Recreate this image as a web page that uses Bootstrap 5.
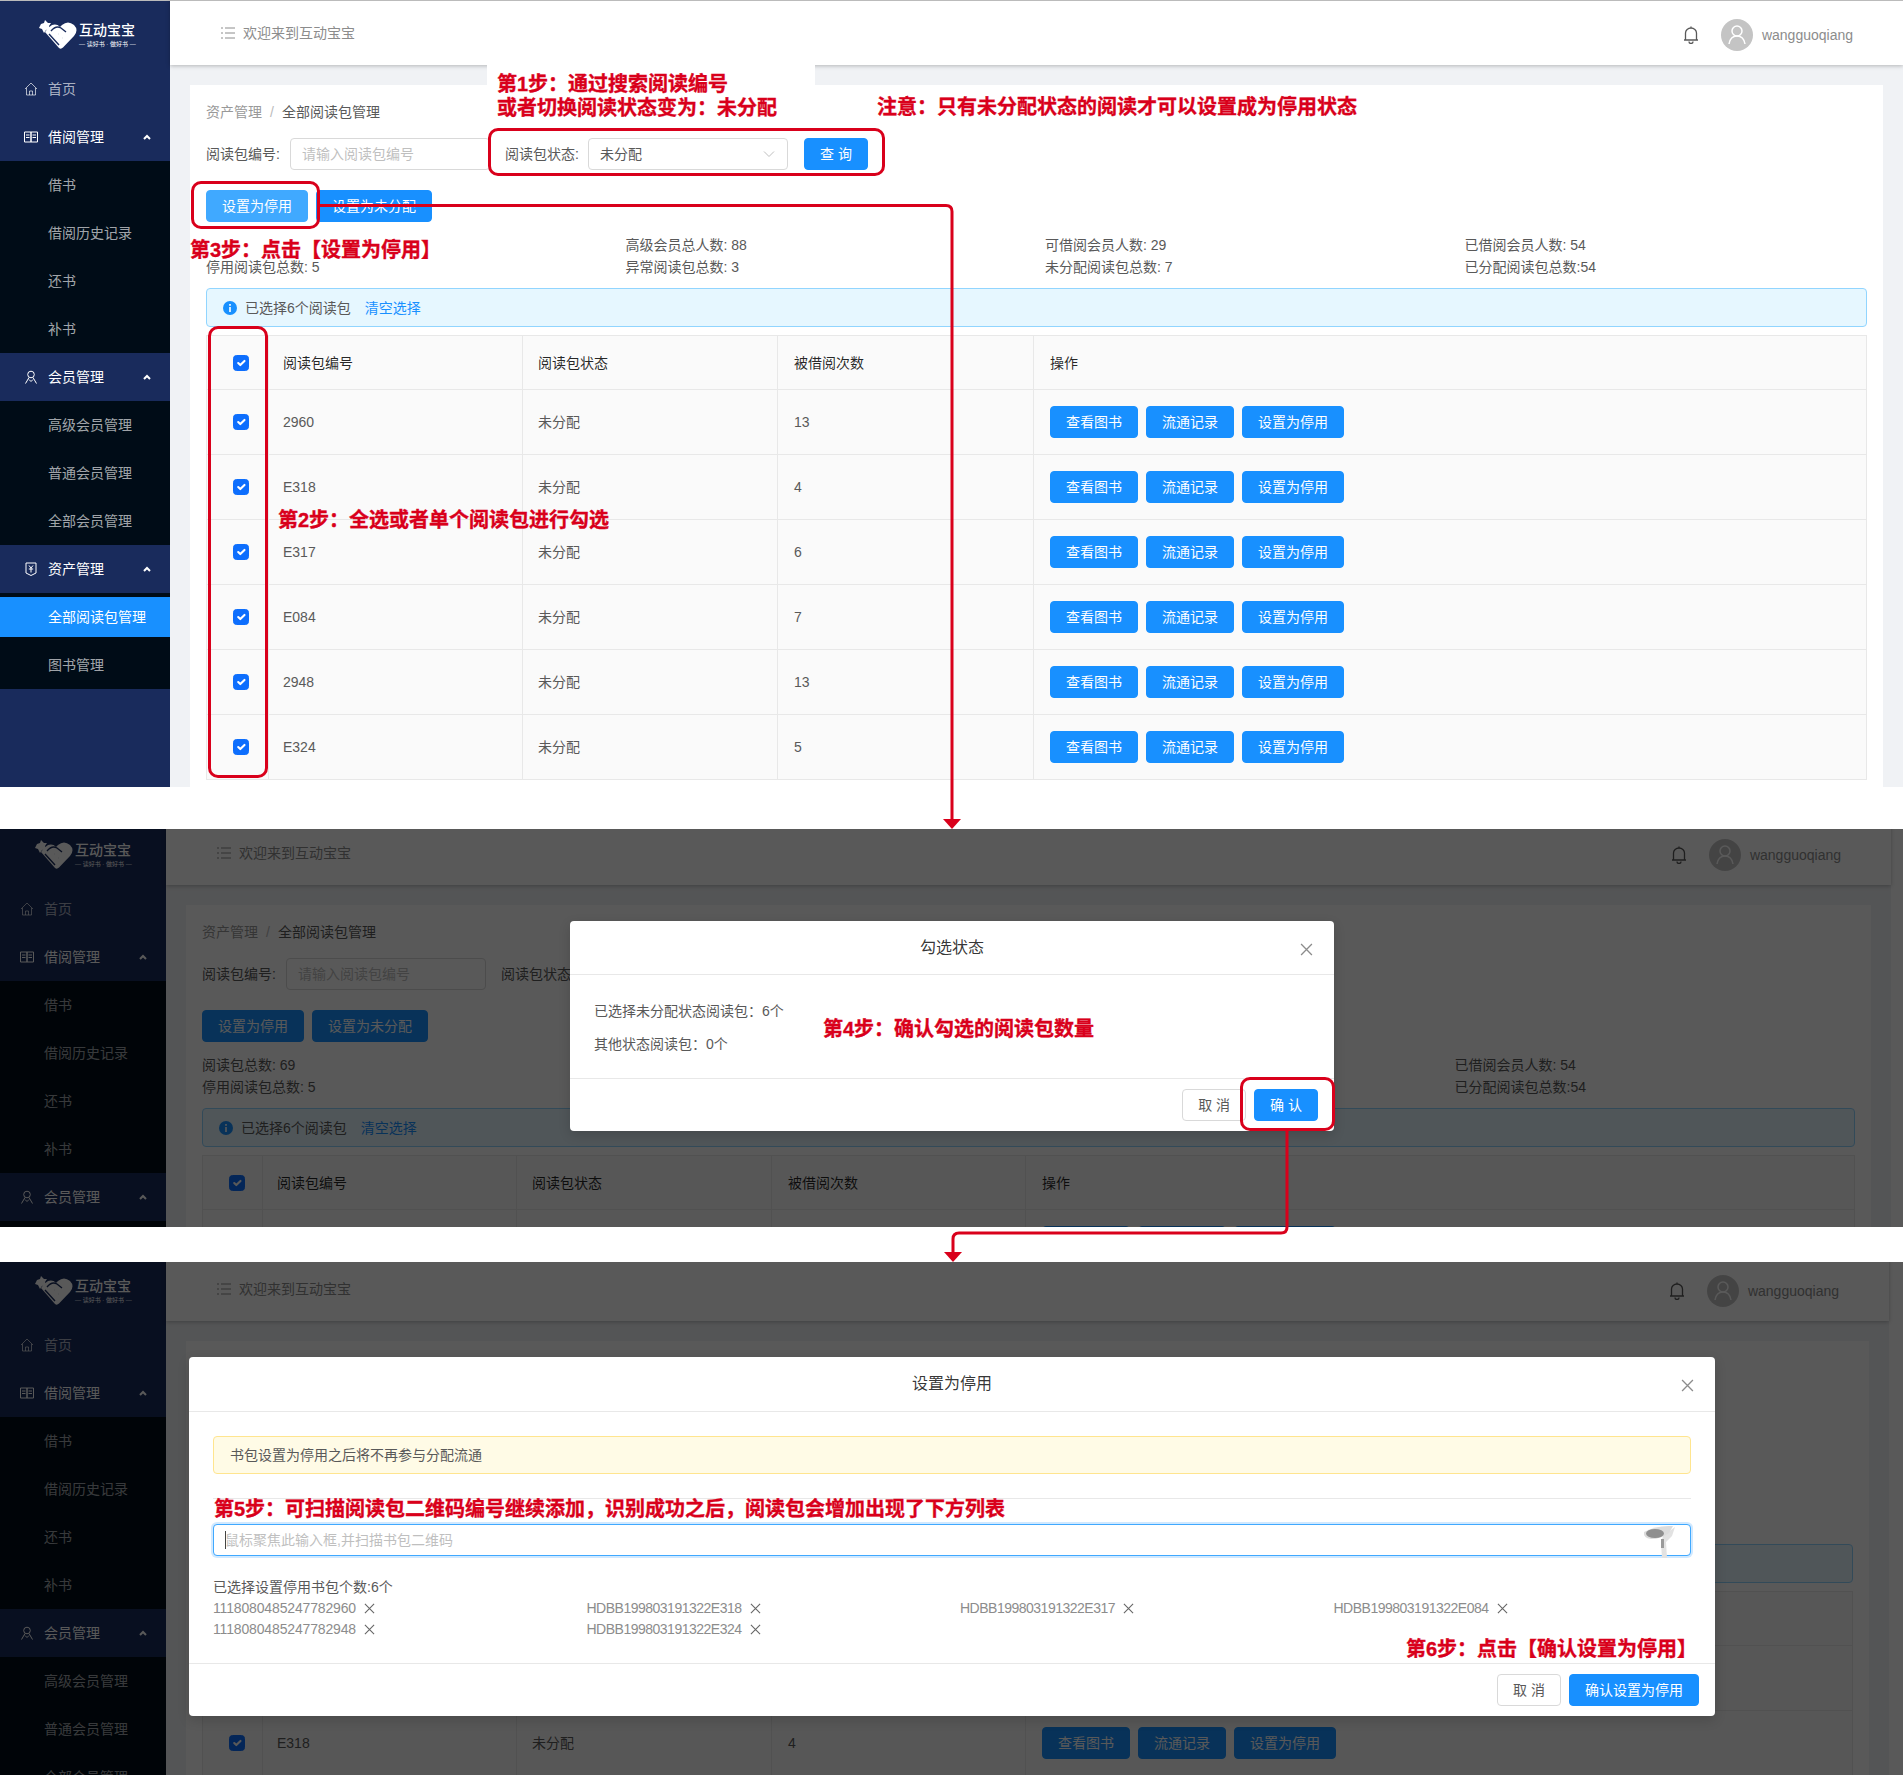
<!DOCTYPE html>
<html lang="zh-CN">
<head>
<meta charset="utf-8">
<title>互动宝宝 - 设置为停用操作步骤</title>
<link href="https://cdn.jsdelivr.net/npm/bootstrap@5.3.0/dist/css/bootstrap.min.css" rel="stylesheet">
<style>
html,body{margin:0;background:#fff}
body{font-family:"Liberation Sans","Noto Sans CJK SC",sans-serif;font-size:14px;line-height:22px;color:#595959}
.canvas{position:relative;width:1903px;height:1775px;overflow:hidden;background:#fff}
.shot{position:relative;overflow:hidden;background:#fff}
.shot-a{height:787px;margin-bottom:42px}
.shot-b{height:398px;margin-bottom:35px}
.shot-c{height:513px}
.app{min-height:1000px}
.shot-a .app{width:1903px}
.shot-b .app{width:1895px;margin-left:-4px;margin-top:-9px}
.shot-c .app{width:1893px;margin-left:-4px;margin-top:-6px}
.scrim{position:absolute;inset:0;background:rgba(0,0,0,.65)}
.side{width:170px;flex:none;background:#192b5c;color:rgba(255,255,255,.65)}
.brand{height:65px;position:relative;border-top:1px solid #bbb}
.brand svg{position:absolute;left:39px;top:17px}
.brand-t{position:absolute;left:79px;top:19px;width:56px;color:#fff;text-align:left}
.brand-t b{display:block;font-size:14px;line-height:20px;font-weight:500}
.brand-t i{display:block;font-style:normal;font-size:6px;line-height:9px;white-space:nowrap}
.nv{height:48px;padding:0 19px 0 24px;display:flex;align-items:center;gap:10px}
.nv svg.ic{width:14px;height:14px;flex:none}
.nv.on{color:#fff}
.nv .up{margin-left:auto;width:8px;height:6px}
.subs{background:#000c17;padding:4px 0}
.subs div{height:40px;line-height:40px;padding-left:48px;margin-bottom:8px}
.subs div:last-child{margin-bottom:0}
.subs .cur{background:#1890ff;color:#fff}
.wrap{flex:1 1 0;min-width:0;background:#f0f2f5;display:flex;flex-direction:column}
.top{height:65px;background:#fff;box-shadow:0 1px 4px rgba(0,0,0,.25);padding:0 50px 0 51px;color:#8c8c8c;position:relative;border-top:1px solid #bbb}
.top .lst{width:14px;height:12px}
.top .who{padding-top:3px;gap:9px;color:#8c8c8c}
.top .bell{width:16px;height:18px;margin-right:13px;color:#595959}
.ava{width:32px;height:32px;border-radius:50%;background:#c4c4c4}
.sheet{flex:1;background:#fff;margin:20px 20px 0;padding:16px 16px 0}
.crumb{color:#999;height:22px}
.crumb span:last-child{color:#595959}
.crumb em{font-style:normal;margin:0 8px;color:#bbb}
.frm{margin-top:15px}
.lbl{width:84px;flex:none;white-space:nowrap}
.lbl2{width:83px;margin-left:15px}
.fld{width:200px;height:32px;font-size:14px;padding:4px 11px;border-color:#d9d9d9;border-radius:4px;color:#595959;flex:none}
.fld::placeholder{color:#bfbfbf}
.form-select.fld{background-size:12px 12px;background-position:right 12px center;background-image:url("data:image/svg+xml,%3csvg xmlns='http://www.w3.org/2000/svg' viewBox='0 0 12 12'%3e%3cpath fill='none' stroke='%23bfbfbf' d='M1 3.500l5 5 5-5'/%3e%3c/svg%3e")}
.btn-a{--bs-btn-bg:#1890ff;--bs-btn-border-color:#1890ff;--bs-btn-color:#fff;height:32px;padding:0 15px;font-size:14px;line-height:30px;border-radius:4px;white-space:nowrap}
.btn-a.lite{--bs-btn-bg:#40a9ff;--bs-btn-border-color:#40a9ff}
.btn-g{--bs-btn-bg:#fff;--bs-btn-border-color:#d9d9d9;--bs-btn-color:#595959;height:32px;padding:0 15px;font-size:14px;line-height:30px;border-radius:4px;white-space:nowrap}
.acts{margin-top:20px}
.stat{margin-top:12px;margin-right:-17px}
.tip{margin:10px 0 8px;height:39px;padding:0 16px;border-radius:4px;background:#e6f7ff;border:1px solid #91d5ff;color:#595959;gap:8px}
.tip svg{width:14px;height:14px}
.tip a{color:#1890ff;text-decoration:none;margin-left:6px}
.tbl{--bs-table-bg:#fafafa;--bs-table-border-color:#e8e8e8;--bs-table-color:#595959;table-layout:fixed;width:100%;margin:0}
.tbl>:not(caption)>*>*{padding:0 16px;vertical-align:middle;height:65px;font-size:14px}
.tbl>thead>tr>th{height:54px;font-weight:400;color:rgba(0,0,0,.85)}
.tbl>*>tr>.c0{width:62px;padding:0}
.tbl .c1{width:254px}.tbl .c2{width:255px}.tbl .c3{width:256px}
.tbl>*>tr>:nth-child(2){padding-left:14px}
.tbl>*>tr>:nth-child(3){padding-left:15px}
.shot-b .tbl>*>tr>.c0,.shot-c .tbl>*>tr>.c0{width:60px}
.shot-b .tbl .c3,.shot-c .tbl .c3{width:254px}
.tick{width:16px;height:16px;margin:0;display:block;margin-left:26px;background-color:#1890ff;border-color:#1890ff;border-radius:2px}
.dlg{position:absolute;background:#fff;border:0;border-radius:4px;box-shadow:0 4px 12px rgba(0,0,0,.15);display:flex;flex-direction:column;color:#595959}
.dlg-1{left:570px;top:92px;width:764px;height:210px}
.dlg-2{left:189px;top:95px;width:1526px;height:359px}
.dlg .modal-header{height:55px;flex:none;padding:0 24px;justify-content:center;position:relative;border-bottom:1px solid #e8e8e8;font-size:16px;line-height:22px;color:rgba(0,0,0,.8)}
.dlg .shut{position:absolute;right:21px;top:22px;width:13px;height:13px;color:#8c8c8c}
.dlg .modal-body{flex:1 1 0;min-height:0;padding:24px 24px 0}
.dlg-1 .modal-header{height:54px}
.dlg-1 .modal-body{padding-top:25px}
.dlg-1 .modal-body p{margin:0 0 11px}
.dlg .modal-footer{height:53px;flex:none;padding:10px 16px;gap:8px;justify-content:flex-end;border-top:1px solid #e8e8e8;display:flex;flex-wrap:nowrap}
.dlg .modal-footer>*{margin:0}
.warn{height:38px;padding:0 16px;margin:0;background:#fffbe6;border:1px solid #ffe58f;border-radius:4px;color:#595959}
.rule{height:1px;background:#e8e8e8;margin:24px 0 25px;opacity:1;border:0}
.scanbox{height:32px}
.scan{height:32px;font-size:14px;padding:4px 11px;border:1px solid #40a9ff;border-radius:4px;box-shadow:0 0 0 2px rgba(24,144,255,.2)}
.scan::placeholder{color:#bfbfbf}
.cursor{position:absolute;left:12px;top:7px;width:1px;height:18px;background:#444}
.gun{position:absolute;right:14px;top:0;width:34px;height:34px}
.picked{margin-top:20px}
.ids{margin-right:-16px;line-height:21px;color:#8c8c8c}
.ids span{letter-spacing:-.5px}
.ids span.digits{letter-spacing:-.15px}
.ids svg{width:11px;height:11px;margin-left:8px;color:#666;vertical-align:-1px}
.hot{position:absolute;border:3px solid #d9001b;border-radius:10px;pointer-events:none}
.hot-a{left:488px;top:128px;width:397px;height:48px}
.hot-b{left:191px;top:181px;width:129px;height:48px}
.hot-c{left:208px;top:326px;width:60px;height:452px}
.hot-d{left:1240px;top:1077px;width:95px;height:54px}
.say{position:absolute;color:#d9001b;font-weight:700;font-size:20px;line-height:24px;white-space:nowrap;-webkit-text-stroke:.35px #d9001b}
.say-1{left:487px;top:65px;width:328px;height:63px;padding:7px 0 0 10px;background:#fff}
.say-n{left:877px;top:95px}
.say-2{left:278px;top:508px}
.say-3{left:190px;top:238px;width:246px;height:22px;background:#fff}
.say-4{left:823px;top:1017px}
.say-5{left:214px;top:1497px}
.say-6{left:1406px;top:1637px}
.wires{position:absolute;left:0;top:0;width:1903px;height:1775px;pointer-events:none}
</style>
</head>
<body>
<svg width="0" height="0" class="position-absolute">
<defs>
<symbol id="i-home" viewBox="0 0 14 14"><path d="M1 7 7 1l6 6M2.500 6v7h9V6M5.500 13V9h3v4" fill="none" stroke="currentColor"/></symbol>
<symbol id="i-book" viewBox="0 0 14 14"><path d="M.5 2h6.500v10H.5zM7 2h6.500v10H7zM2 5h3.500M2 7.500h3.500M8.500 5H12M8.500 7.500H12" fill="none" stroke="currentColor"/></symbol>
<symbol id="i-user" viewBox="0 0 14 14"><circle cx="7" cy="4.500" r="3.300" fill="none" stroke="currentColor"/><path d="M5 7.500 1.500 13.500M9 7.500l3.500 6M5 9.500l2 2 2-2" fill="none" stroke="currentColor"/></symbol>
<symbol id="i-asset" viewBox="0 0 14 14"><path d="M2 1h10v10l-5 2.500L2 11z" fill="none" stroke="currentColor"/><path d="M5 3.500 7 6l2-2.500M4.800 7h4.400M7 6v4.500" fill="none" stroke="currentColor"/></symbol>
<symbol id="i-up" viewBox="0 0 8 6"><path d="M1 5 4 2l3 3" fill="none" stroke="currentColor" stroke-width="2"/></symbol>
<symbol id="i-list" viewBox="0 0 14 12"><path d="M0 1h2M4 1h10M0 6h2M4 6h10M0 11h2M4 11h10" stroke="currentColor"/></symbol>
<symbol id="i-bell" viewBox="0 0 16 18"><path d="M8 .5v2M2.500 14V7a5.500 5 0 0 1 11 0v7M1 14h14M6 15.500a2 2 0 0 0 4 0" fill="none" stroke="currentColor" stroke-width="1.300"/></symbol>
<symbol id="i-face" viewBox="0 0 32 32"><circle cx="16" cy="12" r="5" fill="none" stroke="#fff" stroke-width="1.500"/><path d="M8 25c1-6 4-8 8-8s7 2 8 8" fill="none" stroke="#fff" stroke-width="1.500"/></symbol>
<symbol id="i-x" viewBox="0 0 12 12"><path d="M1 1l10 10M11 1 1 11" stroke="currentColor" fill="none" stroke-width="1.200"/></symbol>
<symbol id="i-info" viewBox="0 0 14 14"><circle cx="7" cy="7" r="7" fill="#1890ff"/><rect x="6.200" y="6" width="1.600" height="5" fill="#fff"/><rect x="6.200" y="3" width="1.600" height="1.800" fill="#fff"/></symbol>
<symbol id="i-logo" viewBox="0 0 38 32"><path d="M6 14 20 30q2 1.500 4-.5L35 18q5-6 0-11-6-5-12 0-1 .8-2 2-3-3.500-8-2L9 10z" fill="#fff"/><path d="M2 6l3-1 1-3 3 3 3 0-2 3 1 3-4 1-2 3-2-4-3-1z" fill="#fff"/><path d="M12 13q5-6 10-3l5 4M10 16l10 11M19 16h.1M23 20h.1" fill="none" stroke="#192b5c" stroke-width="1.400"/></symbol>
<symbol id="i-gun" viewBox="0 0 34 34"><path d="M20 12 32 3l-3 9-6 6 1 16h-5l-1-15z" fill="#e2e2e2"/><path d="M1 8q12-7 29-6l-4 7q-8 6-18 6Q0 14 1 8z" fill="#dcdcdc"/><ellipse cx="12" cy="9.500" rx="9" ry="4.500" fill="#8f8f8f"/><rect x="18" y="15" width="3" height="9" fill="#9a9a9a"/></symbol>
</defs>
</svg>

<div class="canvas">

<!-- 画面一 -->
<section class="shot shot-a">
<div class="app d-flex">
<aside class="side">
<div class="brand"><svg width="38" height="32"><use href="#i-logo"/></svg><div class="brand-t"><b>互动宝宝</b><i>— 读好书 · 做好书 —</i></div></div>
<div class="nv"><svg class="ic"><use href="#i-home"/></svg>首页</div>
<div class="nv on"><svg class="ic"><use href="#i-book"/></svg>借阅管理<svg class="up"><use href="#i-up"/></svg></div>
<div class="subs"><div>借书</div><div>借阅历史记录</div><div>还书</div><div>补书</div></div>
<div class="nv on"><svg class="ic"><use href="#i-user"/></svg>会员管理<svg class="up"><use href="#i-up"/></svg></div>
<div class="subs"><div>高级会员管理</div><div>普通会员管理</div><div>全部会员管理</div></div>
<div class="nv on"><svg class="ic"><use href="#i-asset"/></svg>资产管理<svg class="up"><use href="#i-up"/></svg></div>
<div class="subs"><div class="cur">全部阅读包管理</div><div>图书管理</div></div>
</aside>
<div class="wrap">
<header class="top d-flex align-items-center justify-content-between">
<div class="d-flex align-items-center gap-2"><svg class="lst"><use href="#i-list"/></svg><span>欢迎来到互动宝宝</span></div>
<div class="who d-flex align-items-center"><svg class="bell"><use href="#i-bell"/></svg><svg class="ava"><use href="#i-face"/></svg><span>wangguoqiang</span></div>
</header>
<main class="sheet">
<div class="crumb"><span>资产管理</span><em>/</em><span>全部阅读包管理</span></div>
<div class="frm d-flex align-items-center">
<label class="lbl">阅读包编号:</label><input class="form-control fld" placeholder="请输入阅读包编号">
<label class="lbl lbl2">阅读包状态:</label><select class="form-select fld"><option>未分配</option></select>
<button class="btn btn-a ms-3">查 询</button>
</div>
<div class="acts d-flex gap-2"><button class="btn btn-a lite">设置为停用</button><button class="btn btn-a">设置为未分配</button></div>
<div class="row gx-0 stat">
<div class="col-3">阅读包总数: 69<br>停用阅读包总数: 5</div>
<div class="col-3">高级会员总人数: 88<br>异常阅读包总数: 3</div>
<div class="col-3">可借阅会员人数: 29<br>未分配阅读包总数: 7</div>
<div class="col-3">已借阅会员人数: 54<br>已分配阅读包总数:54</div>
</div>
<div class="alert tip d-flex align-items-center"><svg><use href="#i-info"/></svg><span>已选择6个阅读包</span><a href="#">清空选择</a></div>
<table class="table table-bordered tbl">
<thead><tr><th class="c0"><input class="form-check-input tick" type="checkbox" checked></th><th class="c1">阅读包编号</th><th class="c2">阅读包状态</th><th class="c3">被借阅次数</th><th>操作</th></tr></thead>
<tbody>
<tr><td class="c0"><input class="form-check-input tick" type="checkbox" checked></td><td>2960</td><td>未分配</td><td>13</td><td><div class="d-flex gap-2"><button class="btn btn-a">查看图书</button><button class="btn btn-a">流通记录</button><button class="btn btn-a">设置为停用</button></div></td></tr>
<tr><td class="c0"><input class="form-check-input tick" type="checkbox" checked></td><td>E318</td><td>未分配</td><td>4</td><td><div class="d-flex gap-2"><button class="btn btn-a">查看图书</button><button class="btn btn-a">流通记录</button><button class="btn btn-a">设置为停用</button></div></td></tr>
<tr><td class="c0"><input class="form-check-input tick" type="checkbox" checked></td><td>E317</td><td>未分配</td><td>6</td><td><div class="d-flex gap-2"><button class="btn btn-a">查看图书</button><button class="btn btn-a">流通记录</button><button class="btn btn-a">设置为停用</button></div></td></tr>
<tr><td class="c0"><input class="form-check-input tick" type="checkbox" checked></td><td>E084</td><td>未分配</td><td>7</td><td><div class="d-flex gap-2"><button class="btn btn-a">查看图书</button><button class="btn btn-a">流通记录</button><button class="btn btn-a">设置为停用</button></div></td></tr>
<tr><td class="c0"><input class="form-check-input tick" type="checkbox" checked></td><td>2948</td><td>未分配</td><td>13</td><td><div class="d-flex gap-2"><button class="btn btn-a">查看图书</button><button class="btn btn-a">流通记录</button><button class="btn btn-a">设置为停用</button></div></td></tr>
<tr><td class="c0"><input class="form-check-input tick" type="checkbox" checked></td><td>E324</td><td>未分配</td><td>5</td><td><div class="d-flex gap-2"><button class="btn btn-a">查看图书</button><button class="btn btn-a">流通记录</button><button class="btn btn-a">设置为停用</button></div></td></tr>
</tbody>
</table>
</main>
</div>
</div>
</section>

<!-- 画面二 -->
<section class="shot shot-b">
<div class="app d-flex">
<aside class="side">
<div class="brand"><svg width="38" height="32"><use href="#i-logo"/></svg><div class="brand-t"><b>互动宝宝</b><i>— 读好书 · 做好书 —</i></div></div>
<div class="nv"><svg class="ic"><use href="#i-home"/></svg>首页</div>
<div class="nv on"><svg class="ic"><use href="#i-book"/></svg>借阅管理<svg class="up"><use href="#i-up"/></svg></div>
<div class="subs"><div>借书</div><div>借阅历史记录</div><div>还书</div><div>补书</div></div>
<div class="nv on"><svg class="ic"><use href="#i-user"/></svg>会员管理<svg class="up"><use href="#i-up"/></svg></div>
<div class="subs"><div>高级会员管理</div></div>
</aside>
<div class="wrap">
<header class="top d-flex align-items-center justify-content-between">
<div class="d-flex align-items-center gap-2"><svg class="lst"><use href="#i-list"/></svg><span>欢迎来到互动宝宝</span></div>
<div class="who d-flex align-items-center"><svg class="bell"><use href="#i-bell"/></svg><svg class="ava"><use href="#i-face"/></svg><span>wangguoqiang</span></div>
</header>
<main class="sheet">
<div class="crumb"><span>资产管理</span><em>/</em><span>全部阅读包管理</span></div>
<div class="frm d-flex align-items-center">
<label class="lbl">阅读包编号:</label><input class="form-control fld" placeholder="请输入阅读包编号">
<label class="lbl lbl2">阅读包状态:</label><select class="form-select fld"><option>未分配</option></select>
<button class="btn btn-a ms-3">查 询</button>
</div>
<div class="acts d-flex gap-2"><button class="btn btn-a">设置为停用</button><button class="btn btn-a">设置为未分配</button></div>
<div class="row gx-0 stat">
<div class="col-3">阅读包总数: 69<br>停用阅读包总数: 5</div>
<div class="col-3">高级会员总人数: 88<br>异常阅读包总数: 3</div>
<div class="col-3">可借阅会员人数: 29<br>未分配阅读包总数: 7</div>
<div class="col-3">已借阅会员人数: 54<br>已分配阅读包总数:54</div>
</div>
<div class="alert tip d-flex align-items-center"><svg><use href="#i-info"/></svg><span>已选择6个阅读包</span><a href="#">清空选择</a></div>
<table class="table table-bordered tbl">
<thead><tr><th class="c0"><input class="form-check-input tick" type="checkbox" checked></th><th class="c1">阅读包编号</th><th class="c2">阅读包状态</th><th class="c3">被借阅次数</th><th>操作</th></tr></thead>
<tbody>
<tr><td class="c0"><input class="form-check-input tick" type="checkbox" checked></td><td>2960</td><td>未分配</td><td>13</td><td><div class="d-flex gap-2"><button class="btn btn-a">查看图书</button><button class="btn btn-a">流通记录</button><button class="btn btn-a">设置为停用</button></div></td></tr>
</tbody>
</table>
</main>
</div>
</div>
<div class="scrim"></div>
<div class="dlg dlg-1 modal-content">
<div class="modal-header">勾选状态<svg class="shut"><use href="#i-x"/></svg></div>
<div class="modal-body"><p>已选择未分配状态阅读包：6个</p><p>其他状态阅读包：0个</p></div>
<div class="modal-footer"><button class="btn btn-g">取 消</button><button class="btn btn-a">确 认</button></div>
</div>
</section>

<!-- 画面三 -->
<section class="shot shot-c">
<div class="app d-flex">
<aside class="side">
<div class="brand"><svg width="38" height="32"><use href="#i-logo"/></svg><div class="brand-t"><b>互动宝宝</b><i>— 读好书 · 做好书 —</i></div></div>
<div class="nv"><svg class="ic"><use href="#i-home"/></svg>首页</div>
<div class="nv on"><svg class="ic"><use href="#i-book"/></svg>借阅管理<svg class="up"><use href="#i-up"/></svg></div>
<div class="subs"><div>借书</div><div>借阅历史记录</div><div>还书</div><div>补书</div></div>
<div class="nv on"><svg class="ic"><use href="#i-user"/></svg>会员管理<svg class="up"><use href="#i-up"/></svg></div>
<div class="subs"><div>高级会员管理</div><div>普通会员管理</div><div>全部会员管理</div></div>
</aside>
<div class="wrap">
<header class="top d-flex align-items-center justify-content-between">
<div class="d-flex align-items-center gap-2"><svg class="lst"><use href="#i-list"/></svg><span>欢迎来到互动宝宝</span></div>
<div class="who d-flex align-items-center"><svg class="bell"><use href="#i-bell"/></svg><svg class="ava"><use href="#i-face"/></svg><span>wangguoqiang</span></div>
</header>
<main class="sheet">
<div class="crumb"><span>资产管理</span><em>/</em><span>全部阅读包管理</span></div>
<div class="frm d-flex align-items-center">
<label class="lbl">阅读包编号:</label><input class="form-control fld" placeholder="请输入阅读包编号">
<label class="lbl lbl2">阅读包状态:</label><select class="form-select fld"><option>未分配</option></select>
<button class="btn btn-a ms-3">查 询</button>
</div>
<div class="acts d-flex gap-2"><button class="btn btn-a">设置为停用</button><button class="btn btn-a">设置为未分配</button></div>
<div class="row gx-0 stat">
<div class="col-3">阅读包总数: 69<br>停用阅读包总数: 5</div>
<div class="col-3">高级会员总人数: 88<br>异常阅读包总数: 3</div>
<div class="col-3">可借阅会员人数: 29<br>未分配阅读包总数: 7</div>
<div class="col-3">已借阅会员人数: 54<br>已分配阅读包总数:54</div>
</div>
<div class="alert tip d-flex align-items-center"><svg><use href="#i-info"/></svg><span>已选择6个阅读包</span><a href="#">清空选择</a></div>
<table class="table table-bordered tbl">
<thead><tr><th class="c0"><input class="form-check-input tick" type="checkbox" checked></th><th class="c1">阅读包编号</th><th class="c2">阅读包状态</th><th class="c3">被借阅次数</th><th>操作</th></tr></thead>
<tbody>
<tr><td class="c0"><input class="form-check-input tick" type="checkbox" checked></td><td>2960</td><td>未分配</td><td>13</td><td><div class="d-flex gap-2"><button class="btn btn-a">查看图书</button><button class="btn btn-a">流通记录</button><button class="btn btn-a">设置为停用</button></div></td></tr>
<tr><td class="c0"><input class="form-check-input tick" type="checkbox" checked></td><td>E318</td><td>未分配</td><td>4</td><td><div class="d-flex gap-2"><button class="btn btn-a">查看图书</button><button class="btn btn-a">流通记录</button><button class="btn btn-a">设置为停用</button></div></td></tr>
</tbody>
</table>
</main>
</div>
</div>
<div class="scrim"></div>
<div class="dlg dlg-2 modal-content">
<div class="modal-header">设置为停用<svg class="shut"><use href="#i-x"/></svg></div>
<div class="modal-body">
<div class="alert warn d-flex align-items-center">书包设置为停用之后将不再参与分配流通</div>
<hr class="rule">
<div class="scanbox position-relative"><input class="form-control scan" placeholder="鼠标聚焦此输入框,并扫描书包二维码"><span class="cursor"></span><svg class="gun"><use href="#i-gun"/></svg></div>
<div class="picked">已选择设置停用书包个数:6个</div>
<div class="row gx-0 ids">
<div class="col-3"><span class="digits">1118080485247782960</span><svg><use href="#i-x"/></svg></div>
<div class="col-3"><span>HDBB199803191322E318</span><svg><use href="#i-x"/></svg></div>
<div class="col-3"><span>HDBB199803191322E317</span><svg><use href="#i-x"/></svg></div>
<div class="col-3"><span>HDBB199803191322E084</span><svg><use href="#i-x"/></svg></div>
<div class="col-3"><span class="digits">1118080485247782948</span><svg><use href="#i-x"/></svg></div>
<div class="col-3"><span>HDBB199803191322E324</span><svg><use href="#i-x"/></svg></div>
</div>
</div>
<div class="modal-footer"><button class="btn btn-g">取 消</button><button class="btn btn-a">确认设置为停用</button></div>
</div>
</section>

<!-- 标注层 -->
<svg class="wires" viewBox="0 0 1903 1775">
<path d="M320 205.500H946q6 0 6 6V820" fill="none" stroke="#d9001b" stroke-width="3"/>
<polygon points="943,819 961,819 952,829" fill="#d9001b"/>
<path d="M1287 1131V1227q0 6-6 6H959q-6 0-6 6V1253" fill="none" stroke="#d9001b" stroke-width="3"/>
<polygon points="944,1252 962,1252 953,1262" fill="#d9001b"/>
</svg>
<div class="hot hot-a"></div><div class="hot hot-b"></div><div class="hot hot-c"></div><div class="hot hot-d"></div>
<div class="say say-1">第1步：通过搜索阅读编号<br>或者切换阅读状态变为：未分配</div>
<div class="say say-n">注意：只有未分配状态的阅读才可以设置成为停用状态</div>
<div class="say say-2">第2步：全选或者单个阅读包进行勾选</div>
<div class="say say-3">第3步：点击【设置为停用】</div>
<div class="say say-4">第4步：确认勾选的阅读包数量</div>
<div class="say say-5">第5步：可扫描阅读包二维码编号继续添加，识别成功之后，阅读包会增加出现了下方列表</div>
<div class="say say-6">第6步：点击【确认设置为停用】</div>
</div>
<script src="https://cdn.jsdelivr.net/npm/bootstrap@5.3.0/dist/js/bootstrap.bundle.min.js"></script>
</body>
</html>
